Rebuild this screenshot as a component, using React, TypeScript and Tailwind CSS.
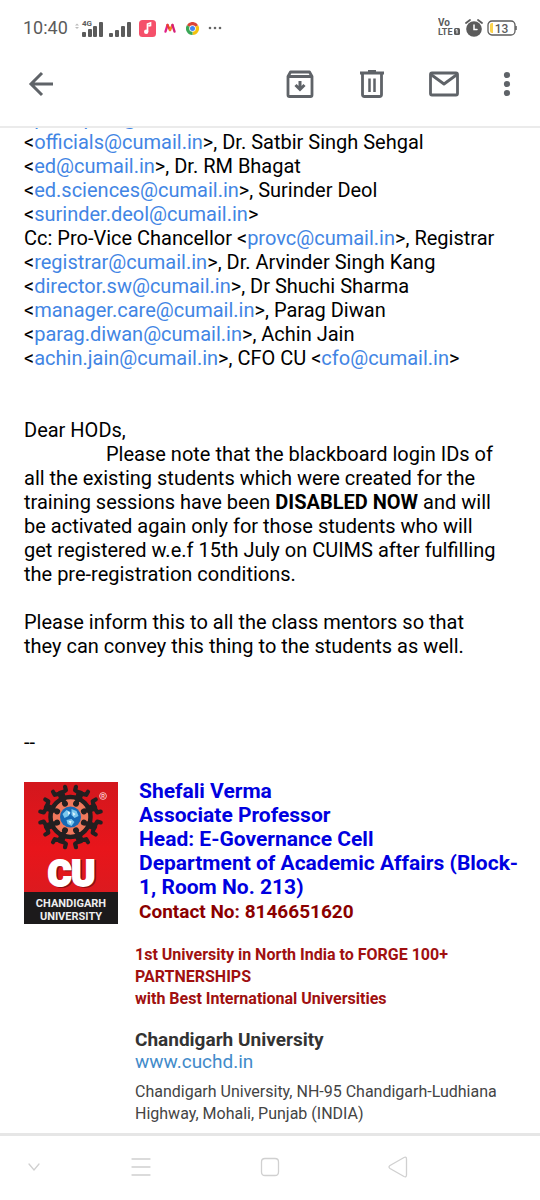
import React from "react";

function Mail({ a }: { a: string }) {
  return (
    <>
      &lt;<a href={`mailto:${a}`} className="text-[#4285e4]">{a}</a>&gt;
    </>
  );
}

function Burst() {
  const angles = [22.5, 67.5, 112.5, 157.5, 202.5, 247.5, 292.5, 337.5];
  return (
    <g transform="translate(46.5 35)">
      <circle r="20" fill="#f0785c" stroke="#231f20" strokeWidth="4.500" />
      {angles.map((d) => (
        <g key={d} transform={`rotate(${d})`} stroke="#231f20" fill="none" strokeLinecap="round" strokeLinejoin="round">
          <circle cy="-14.5" r="3" fill="#231f20" stroke="none" />
          <path d="M0 -20V-25" strokeWidth="7" />
          <path d="M0 -25.500L-6 -26.500L-6.500 -30M0 -25.500L6 -26.500L6.500 -30" strokeWidth="4.200" />
        </g>
      ))}
      <circle r="10.5" fill="#1769b5" />
      <path d="M-8 -3L-4 -7L0 -5L-2 -1L-6 1ZM1 -8L6 -6L8 -1L4 1L1 -2ZM-4 3L1 2L4 5L1 9L-3 7Z" fill="#7cc8ee" />
      <path d="M-3 -6L0 -4L-2 -2ZM2 -5L5 -3L3 -1ZM-2 4L1 4L0 7Z" fill="#e4f6fd" />
    </g>
  );
}

function Logo() {
  return (
    <svg viewBox="0 0 94 142" className="w-[94px] shrink-0" role="img" aria-label="Chandigarh University">
      <defs>
        <linearGradient id="red" x1="0" y1="0" x2="0" y2="1">
          <stop offset="0" stopColor="#d3171d" />
          <stop offset="0.6" stopColor="#e8151b" />
          <stop offset="1" stopColor="#dc1a1f" />
        </linearGradient>
      </defs>
      <rect width="94" height="111" fill="url(#red)" />
      <rect y="110" width="94" height="32" fill="#1c1a1b" />
      <Burst />
      <circle cx="79" cy="14" r="3.4" fill="none" stroke="#f7b9b5" strokeWidth="1" />
      <text x="79" y="16" textAnchor="middle" fontFamily="Liberation Sans, sans-serif" fontWeight="700" fontSize="5" fill="#fbd5d2">R</text>
      <g fontFamily="Roboto, sans-serif" textAnchor="middle">
        <text x="49" y="105" fontSize="36" fontWeight="900" fill="#8c0e12" stroke="#8c0e12" strokeWidth="2">CU</text>
        <text x="47.500" y="103.500" fontSize="36" fontWeight="900" fill="#fff" stroke="#fff" strokeWidth="2">CU</text>
        <text x="47" y="125" fontSize="11" fontWeight="700" fill="#eee">CHANDIGARH</text>
        <text x="47" y="138" fontSize="11" fontWeight="700" fill="#eee">UNIVERSITY</text>
      </g>
    </svg>
  );
}

function StatusBar() {
  return (
    <div className="flex h-14 items-center justify-between pl-[23px] pr-[23px] text-[#5b5b5b]">
      <div className="flex items-center">
        <span className="w-[45px] text-[18px] leading-6">10:40</span>
        <svg className="ml-1 h-6 w-[62px]" viewBox="0 0 62 24" fill="#5b5b5b" aria-hidden="true">
          <path d="M3 9.500L5 7.500L7 9.500ZM3 11L5 13L7 11Z" fill="#bbb" />
          <text x="10" y="10" fontSize="8" fontWeight="700" fontFamily="Roboto, sans-serif">4G</text>
          <rect x="10" y="16" width="4" height="5" rx="1" />
          <rect x="16" y="13" width="4" height="8" rx="1" />
          <rect x="21" y="10" width="4" height="11" rx="1" />
          <rect x="27" y="6" width="4" height="15" rx="1" />
          <rect x="37" y="17" width="4" height="4" rx="1" />
          <rect x="43" y="14" width="4" height="7" rx="1" />
          <rect x="49" y="10" width="4" height="11" rx="1" />
          <rect x="55" y="6" width="4" height="15" rx="1" />
        </svg>
        <svg className="ml-[5px] h-[17px] w-[17px]" viewBox="0 0 17 17" aria-hidden="true">
          <rect width="17" height="17" rx="3.500" fill="#f5506a" />
          <path d="M8.500 11.500V4L11.500 3V5.500L9.500 6" fill="none" stroke="#fff" strokeWidth="1.700" />
          <circle cx="7.200" cy="11.700" r="2.200" fill="#fff" />
        </svg>
        <svg className="ml-2 h-[10px] w-3" viewBox="0 0 12 10" fill="none" strokeWidth="2.400" strokeLinecap="round" aria-hidden="true">
          <path d="M1.500 8.500L3.500 2" stroke="#e0218a" />
          <path d="M3.500 2L6 7" stroke="#e8452c" />
          <path d="M6 7L8.500 2" stroke="#f58220" />
          <path d="M8.500 2L10.500 8.500" stroke="#d61f7a" />
        </svg>
        <svg className="ml-[10px] h-[13px] w-[13px]" viewBox="0 0 26 26" aria-hidden="true">
          <path d="M13 13L1.700 6.500A13 13 0 0 1 24.300 6.500Z" fill="#db4437" />
          <path d="M13 13L24.300 6.500A13 13 0 0 1 13 26Z" fill="#f4c20d" />
          <path d="M13 13V26A13 13 0 0 1 1.700 6.500Z" fill="#3aa757" />
          <circle cx="13" cy="13" r="6.500" fill="#fff" />
          <circle cx="13" cy="13" r="5" fill="#4285f4" />
        </svg>
        <svg className="ml-[9px] h-1 w-[14px]" viewBox="0 0 14 4" fill="#666" aria-hidden="true">
          <circle cx="2" cy="2" r="1.300" /><circle cx="7" cy="2" r="1.300" /><circle cx="12" cy="2" r="1.300" />
        </svg>
      </div>
      <div className="flex items-center">
        <svg className="h-5 w-[23px]" viewBox="0 0 23 20" aria-hidden="true" fontFamily="Roboto, sans-serif" fontWeight="700" fill="#5b5b5b">
          <text x="0" y="8" fontSize="10">Vo</text>
          <text x="0" y="17" fontSize="9">LTE</text>
          <rect x="16" y="10" width="6" height="7" rx="1.500" />
          <path d="M17.500 12L19 11.500V15.500" stroke="#fff" fill="none" />
        </svg>
        <svg className="ml-1 h-[19px] w-[18px]" viewBox="0 0 18 19" aria-hidden="true" fill="none" strokeLinecap="round">
          <circle cx="9" cy="10" r="7.800" fill="#5b5b5b" />
          <path d="M1 4L5 1M17 4L13 1" stroke="#5b5b5b" strokeWidth="1.800" />
          <path d="M9 6V10.500H12" stroke="#fff" strokeWidth="1.500" />
        </svg>
        <svg className="ml-1 h-4 w-[30px]" viewBox="0 0 30 16" aria-hidden="true">
          <rect x="1" y="1" width="27" height="14" rx="4" fill="none" stroke="#5b5b5b" strokeWidth="1.300" />
          <path d="M29 6V10" stroke="#5b5b5b" strokeWidth="1.500" />
          <path d="M6 3V13H5Q3 13 3 11V5Q3 3 5 3Z" fill="#fbd34d" />
          <text x="14.500" y="12.500" textAnchor="middle" fontSize="12" fontWeight="500" fontFamily="Roboto, sans-serif" fill="#5b5b5b">13</text>
        </svg>
      </div>
    </div>
  );
}

function Toolbar() {
  return (
    <header className="flex h-[72px] items-center justify-between border-b-2 border-[#ebebeb] pb-[14px] pl-[23px] pr-[15px] text-[#5f6368]">
      <button type="button" aria-label="Back">
        <svg className="h-9 w-9" viewBox="0 0 36 36" fill="none" stroke="currentColor" strokeWidth="3">
          <path d="M30 18H8M19 7L8 18L19 29" />
        </svg>
      </button>
      <div className="flex items-center">
        <button type="button" aria-label="Archive">
          <svg className="h-9 w-9" viewBox="0 0 36 36" fill="none" stroke="currentColor" strokeWidth="3" strokeLinejoin="round">
            <path d="M6 10.500L8.500 6H27.500L30 10.500V29Q30 30.500 28.500 30.500H7.500Q6 30.500 6 29ZM6 10.500H30" strokeWidth="2.800" />
            <path d="M18 15V23M13.500 19L18 23.500L22.500 19" strokeLinejoin="miter" />
          </svg>
        </button>
        <button type="button" aria-label="Delete" className="ml-9">
          <svg className="h-9 w-9" viewBox="0 0 36 36" fill="none" stroke="currentColor" strokeWidth="3">
            <path d="M6 7H30M14 5.500H22" />
            <path d="M8.500 8V28.500Q8.500 30.500 10.500 30.500H25.500Q27.500 30.500 27.500 28.500V8" strokeWidth="2.800" />
            <path d="M15.500 12.500V26M20.500 12.500V26" strokeWidth="2.500" />
          </svg>
        </button>
        <button type="button" aria-label="Mark as unread" className="ml-9">
          <svg className="h-9 w-9" viewBox="0 0 36 36" fill="none" stroke="currentColor" strokeWidth="2.800" strokeLinejoin="round">
            <rect x="4.500" y="7" width="27" height="22" rx="1.500" />
            <path d="M5 8.500L18 18L31 8.500" />
          </svg>
        </button>
        <button type="button" aria-label="More options" className="ml-[27px]">
          <svg className="h-9 w-9" viewBox="0 0 36 36" fill="currentColor">
            <circle cx="18" cy="9" r="3.100" /><circle cx="18" cy="18" r="3.100" /><circle cx="18" cy="27" r="3.100" />
          </svg>
        </button>
      </div>
    </header>
  );
}

function NavBar() {
  return (
    <nav className="flex items-center border-t-[3px] border-[#e6e6e6] pb-[21px] pl-[22px] pt-[19px]">
      {[
        ["Hide", "M7 9L12 15L17 9", ""],
        ["Recent apps", "M3 4H21M3 12H21M3 20H21", "ml-[83px]"],
        ["Home", "M7 3.500H17Q20.500 3.500 20.500 7V17Q20.500 20.500 17 20.500H7Q3.500 20.500 3.500 17V7Q3.500 3.500 7 3.500Z", "ml-[105px]"],
        ["Back", "M4 10.500L18 2.500Q20.500 1.500 20.500 4V20Q20.500 22.500 18 21.500L4 13.500Q2 12 4 10.500Z", "ml-[104px]"],
      ].map(([label, d, gap]) => (
        <button key={label} type="button" aria-label={label} className={gap}>
          <svg className="h-6 w-6" viewBox="0 0 24 24" fill="none" stroke="#d0d0d0" strokeWidth="1.300" strokeLinecap="round">
            <path d={d} />
          </svg>
        </button>
      ))}
    </nav>
  );
}

export default function App() {
  return (
    <div className="flex min-h-screen flex-col bg-white font-[Roboto,sans-serif] text-black">
      <StatusBar />
      <Toolbar />
      <main className="grow overflow-hidden pl-6 pr-4">
        <p className="-mt-[22px] text-[20px] leading-6">
          <Mail a="principals@cumail.in" />,<br />
          <Mail a="officials@cumail.in" />, Dr. Satbir Singh Sehgal<br />
          <Mail a="ed@cumail.in" />, Dr. RM Bhagat<br />
          <Mail a="ed.sciences@cumail.in" />, Surinder Deol<br />
          <Mail a="surinder.deol@cumail.in" /><br />
          Cc: Pro-Vice Chancellor <Mail a="provc@cumail.in" />, Registrar<br />
          <Mail a="registrar@cumail.in" />, Dr. Arvinder Singh Kang<br />
          <Mail a="director.sw@cumail.in" />, Dr Shuchi Sharma<br />
          <Mail a="manager.care@cumail.in" />, Parag Diwan<br />
          <Mail a="parag.diwan@cumail.in" />, Achin Jain<br />
          <Mail a="achin.jain@cumail.in" />, CFO CU <Mail a="cfo@cumail.in" />
        </p>
        <div className="mt-12 text-[20px] leading-6">
          <p>Dear HODs,</p>
          <p className="indent-[82px]">
            Please note that the blackboard login IDs of<br />all the existing students which were created for the<br />
            training sessions have been <b>DISABLED NOW</b> and will<br />be activated again only for those students who will<br />
            get registered w.e.f 15th July on CUIMS after fulfilling<br />the pre-registration conditions.
          </p>
          <p className="mt-6">Please inform this to all the class mentors so that<br />they can convey this thing to the students as well.</p>
          <p className="mt-[72px]">--</p>
        </div>
        <div className="mt-[25px] flex items-start">
          <div className="mt-[3px] flex"><Logo /></div>
          <div className="ml-[17px]">
            <div className="ml-1 font-bold">
              <p className="text-[21px] leading-6 text-[#0000e0]">
                Shefali Verma<br />Associate Professor<br />Head: E-Governance Cell<br />Department of Academic Affairs (Block-<br />1, Room No. 213)
              </p>
              <p className="text-[19px] leading-[25px] text-[#8b0000]">Contact No: 8146651620</p>
            </div>
            <p className="mt-5 text-[16px] font-bold leading-[22px] text-[#a01010]">
              1st University in North India to FORGE 100+<br />PARTNERSHIPS<br />with Best International Universities
            </p>
            <p className="mt-[19px] text-[19px] font-bold leading-[22px] text-[#333]">Chandigarh University</p>
            <a href="http://www.cuchd.in" className="block text-[19px] leading-[22px] text-[#428bca]">www.cuchd.in</a>
            <p className="mt-2 text-[16px] leading-[22px] text-[#444]">
              Chandigarh University, NH-95 Chandigarh-Ludhiana<br />Highway, Mohali, Punjab (INDIA)
            </p>
          </div>
        </div>
      </main>
      <NavBar />
    </div>
  );
}
